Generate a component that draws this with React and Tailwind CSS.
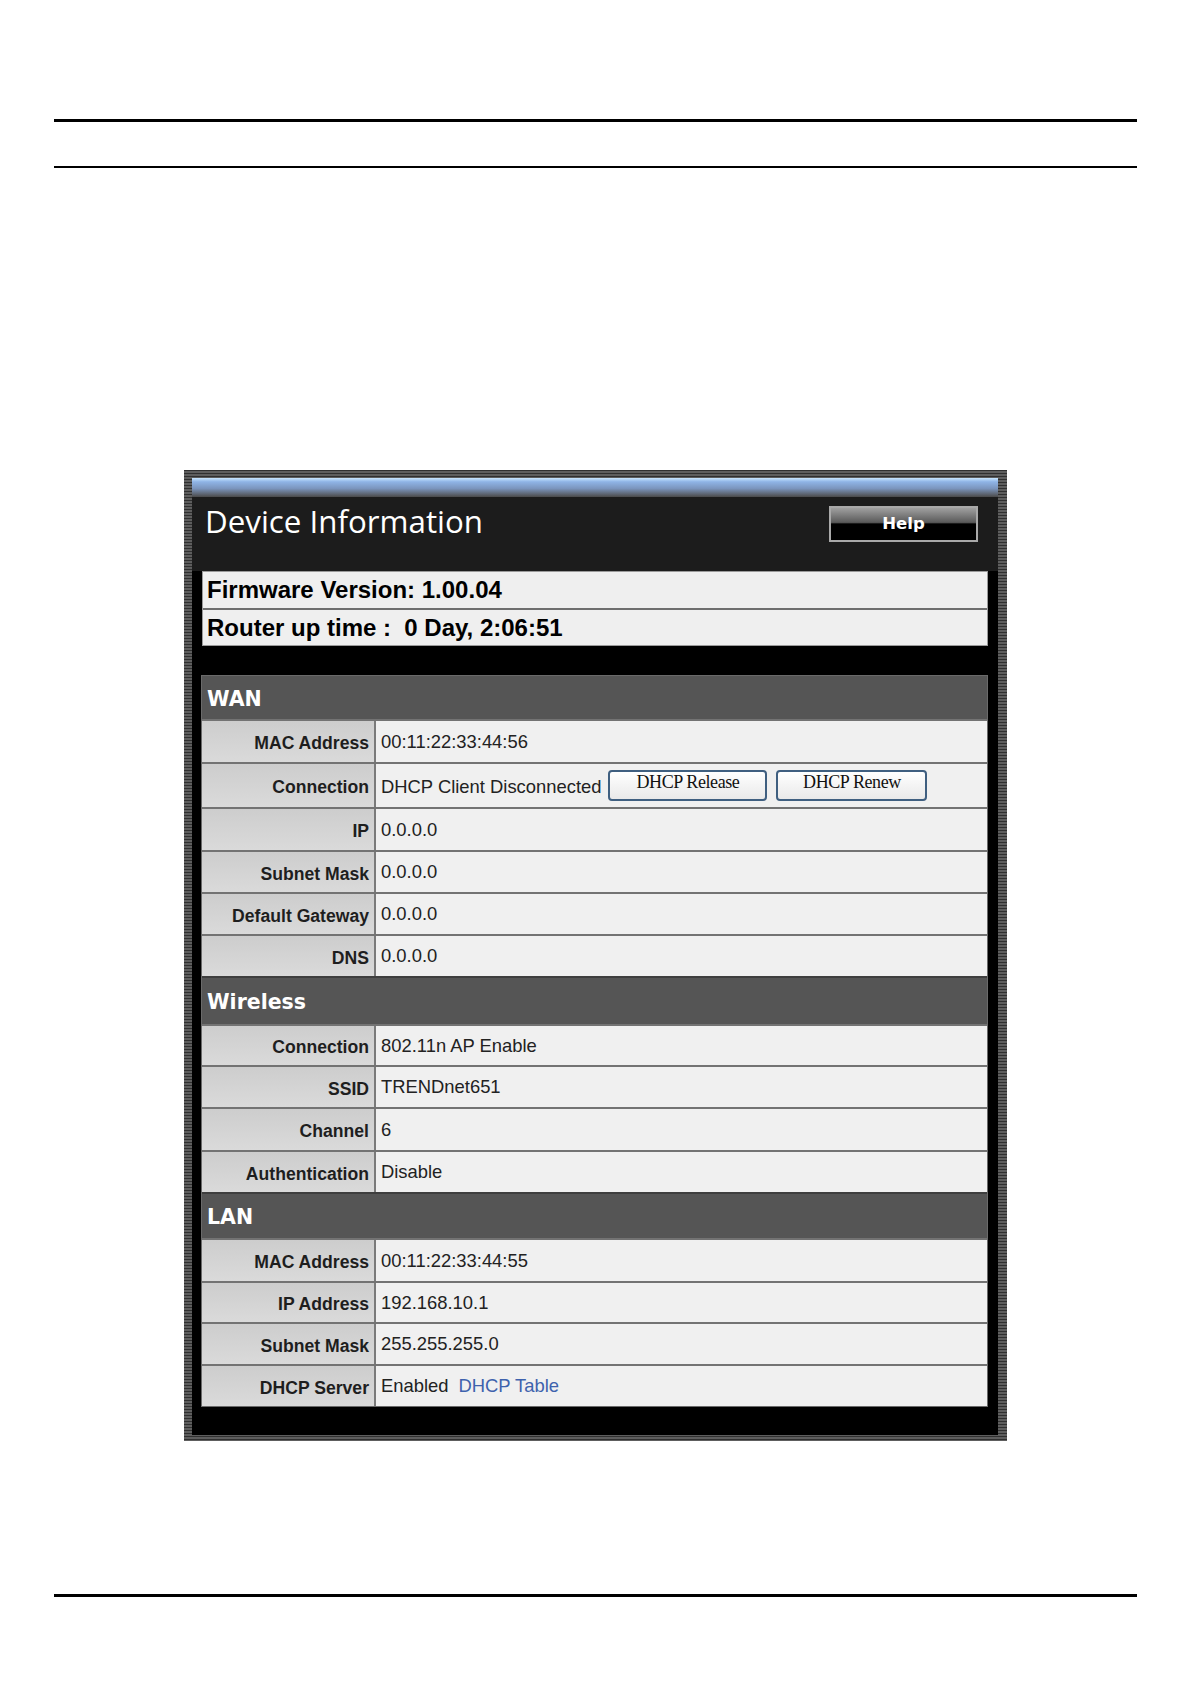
import React from 'react';

const SANS = "font-['Liberation_Sans',Arial,sans-serif]";

const wan = [
  { label: 'MAC Address', value: '00:11:22:33:44:56', h: 'h-[43px]' },
  { label: 'Connection', value: 'DHCP Client Disconnected', h: 'h-[45px]', buttons: true },
  { label: 'IP', value: '0.0.0.0', h: 'h-[43px]' },
  { label: 'Subnet Mask', value: '0.0.0.0', h: 'h-[42px]' },
  { label: 'Default Gateway', value: '0.0.0.0', h: 'h-[42px]' },
  { label: 'DNS', value: '0.0.0.0', h: 'h-[42px]' },
];

const wireless = [
  { label: 'Connection', value: '802.11n AP Enable', h: 'h-[41px]' },
  { label: 'SSID', value: 'TRENDnet651', h: 'h-[42px]' },
  { label: 'Channel', value: '6', h: 'h-[43px]' },
  { label: 'Authentication', value: 'Disable', h: 'h-[42px]' },
];

const lan = [
  { label: 'MAC Address', value: '00:11:22:33:44:55', h: 'h-[43px]' },
  { label: 'IP Address', value: '192.168.10.1', h: 'h-[41px]' },
  { label: 'Subnet Mask', value: '255.255.255.0', h: 'h-[42px]' },
  { label: 'DHCP Server', value: 'Enabled', h: 'h-[42px]', link: 'DHCP Table' },
];

const SectionHeader = ({ title, h }) => (
  <div className={`${h} flex items-center pl-[5px] pt-[3px] bg-[#555555] border-t-2 border-[#3e3e3e] text-white font-bold text-[20.5px] font-['DejaVu_Sans',Verdana,sans-serif]`}>
    {title}
  </div>
);

const Row = ({ row }) => {
  if (row.buttons) {
    return (
      <div className={`flex ${row.h} border-t-2 border-[#737373]`}>
        <div className={`w-[174px] shrink-0 border-r-2 border-[#7a7a7a] bg-[linear-gradient(to_bottom,#cdcdcd,#dadada)] flex items-end justify-end pr-[5px] pb-[7px] font-bold text-[17.6px] text-[#1e1e1e] ${SANS}`}>
          {row.label}
        </div>
        <div className={`flex-1 bg-[#f0f0f0] flex items-end pl-[5px] pb-[6px] text-[18.4px] text-[#222] ${SANS}`}>
          <span>{row.value}</span>
          <button className="ml-[7px] w-[159px] h-[31px] rounded-[4px] border-2 border-[#3f5f80] bg-[linear-gradient(to_bottom,#ffffff,#e9e9e9)] flex items-start justify-center leading-[20px] text-[18px] text-[#111] font-['Liberation_Serif','Times_New_Roman',serif] tracking-[-0.4px]">
            DHCP Release
          </button>
          <button className="ml-[9px] w-[151px] h-[31px] rounded-[4px] border-2 border-[#3f5f80] bg-[linear-gradient(to_bottom,#ffffff,#e9e9e9)] flex items-start justify-center leading-[20px] text-[18px] text-[#111] font-['Liberation_Serif','Times_New_Roman',serif] tracking-[-0.4px]">
            DHCP Renew
          </button>
        </div>
      </div>
    );
  }
  return (
    <div className={`flex ${row.h} border-t-2 border-[#737373]`}>
      <div className={`w-[174px] shrink-0 border-r-2 border-[#7a7a7a] bg-[linear-gradient(to_bottom,#cdcdcd,#dadada)] flex items-center justify-end pr-[5px] pt-[4px] font-bold text-[17.6px] text-[#1e1e1e] ${SANS}`}>
        {row.label}
      </div>
      <div className={`flex-1 bg-[#f0f0f0] flex items-center pl-[5px] text-[18.4px] text-[#222] ${SANS}`}>
        {row.value}
        {row.link && <span className="ml-[10px] text-[#3e62ad]">{row.link}</span>}
      </div>
    </div>
  );
};

export default function App() {
  return (
    <div className="w-[1191px] h-[1684px] bg-white overflow-hidden">
      <div className="pt-[119px] mx-[54px]">
        <div className="h-[3px] bg-black" />
        <div className="h-[2px] bg-black mt-[44px]" />
      </div>

      {/* Device information panel */}
      <div className="mt-[302px] mx-auto w-[823px] pl-[8px] pr-[9px] pt-[8px] pb-[6px] bg-[repeating-linear-gradient(to_bottom,#303030_0px,#303030_1px,#5e5e5e_1px,#5e5e5e_3px)]">
        <div className="bg-black">
          <div className="h-[19px] bg-[linear-gradient(to_bottom,#c8e6ff_0%,#8fb4e6_20%,#7b95bd_55%,#5d6470_85%,#4a4a4a_100%)]" />
          <div className="h-[74px] bg-[#1c1c1c] flex justify-between items-start">
            <div className="pl-[13px] pt-[3px] leading-[42px] text-[31.3px] text-white font-['Open_Sans','Segoe_UI',sans-serif]">
              Device Information
            </div>
            <button className="mt-[9px] mr-[20px] w-[149px] h-[36px] border-2 border-[#a9a9a9] bg-[linear-gradient(to_bottom,#a0a0a0_0%,#5a5a5a_45%,#000_50%,#000_100%)] text-white font-bold text-[16.5px] font-['DejaVu_Sans',Verdana,sans-serif] flex items-center justify-center">
              Help
            </button>
          </div>

          <div className={`mx-[10px] border border-[#9a9a9a] bg-[#efefef] font-bold text-[24px] text-black ${SANS}`}>
            <div className="h-[36px] flex items-center pl-[4px]">Firmware Version: 1.00.04</div>
            <div className="h-[37px] flex items-center pl-[4px] border-t-2 border-[#6e6e6e]">
              Router up time :&nbsp;&nbsp;0 Day, 2:06:51
            </div>
          </div>

          <div className="ml-[9px] mr-[10px] mt-[29px] border border-[#6a6a6a]">
            <div className="h-[43px] flex items-center pl-[5px] pt-[3px] bg-[#555555] text-white font-bold text-[20.5px] font-['DejaVu_Sans',Verdana,sans-serif]">
              WAN
            </div>
            {wan.map((r) => (
              <Row key={'w' + r.label} row={r} />
            ))}
            <SectionHeader title="Wireless" h="h-[48px]" />
            {wireless.map((r) => (
              <Row key={'wl' + r.label} row={r} />
            ))}
            <SectionHeader title="LAN" h="h-[46px]" />
            {lan.map((r) => (
              <Row key={'l' + r.label} row={r} />
            ))}
          </div>
          <div className="h-[28px]" />
        </div>
      </div>

      <div className="mx-[54px] mt-[153px] h-[3px] bg-black" />
    </div>
  );
}
